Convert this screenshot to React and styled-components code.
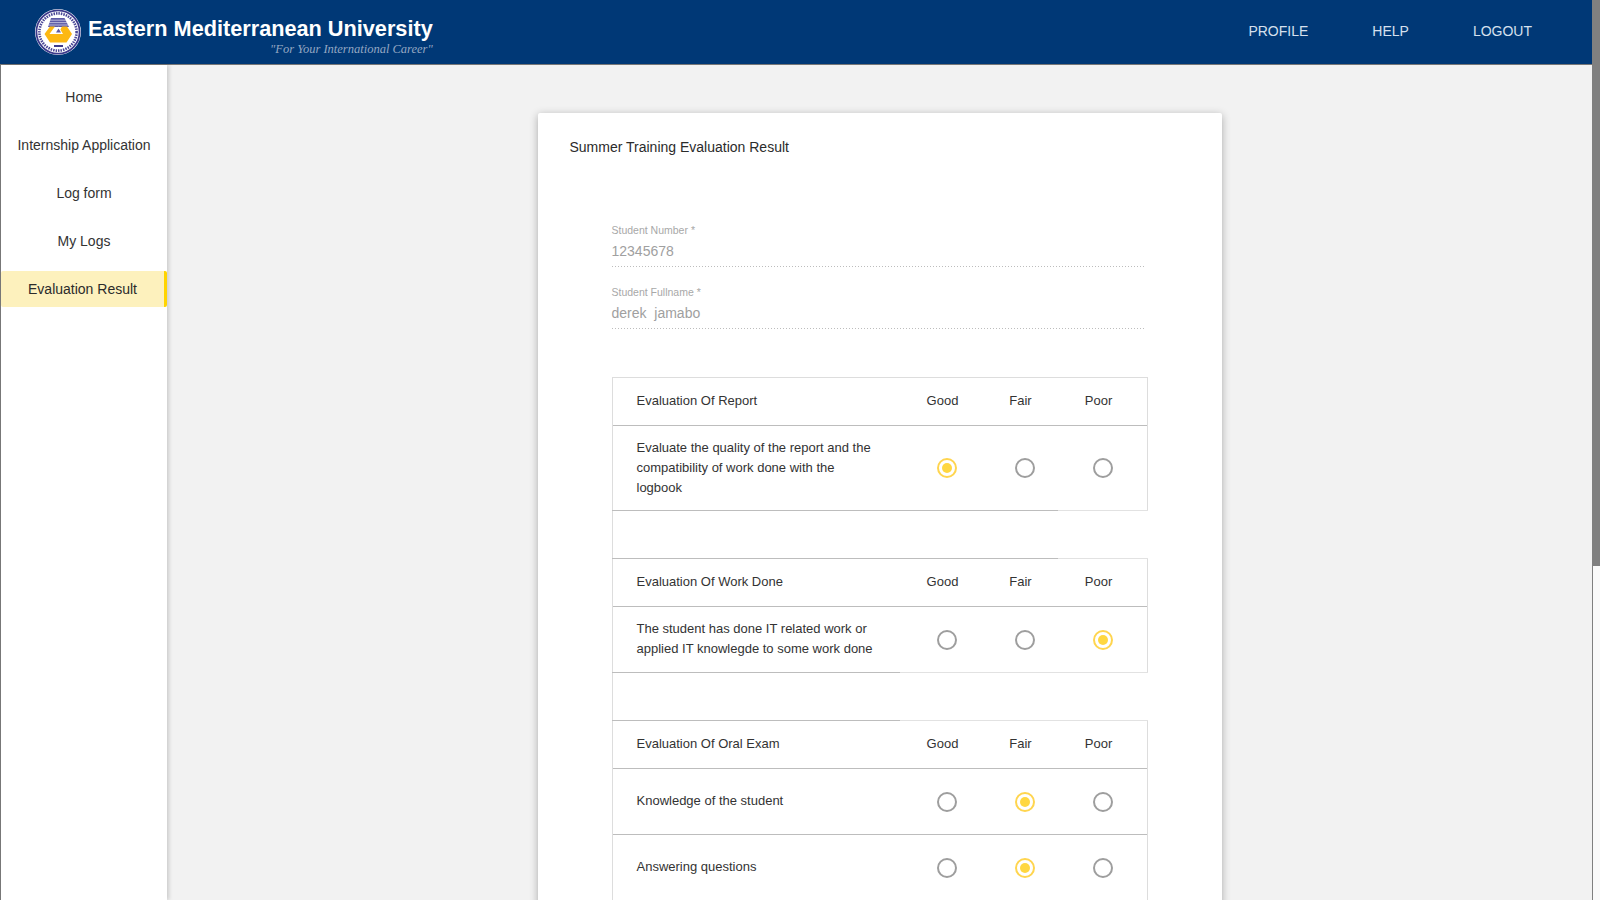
import React from "react";
import styled, { createGlobalStyle } from "styled-components";

const Global = createGlobalStyle`
  html, body { height: 100%; overflow: hidden; }
  body { margin: 0; background: #f2f2f2; font-family: "Liberation Sans", Arial, sans-serif; color: #333; }
  #root { height: 100%; }
  * { box-sizing: border-box; }
`;
const Viewport = styled.div`display: flex; height: 100vh; overflow: hidden;`;
const Shell = styled.div`display: flex; flex-direction: column; flex: 1; min-width: 0; height: 100%;`;
const ScrollTrack = styled.div`width: 8px; flex: none; background: #fafafa; border-left: 1px solid #808080;`;
const ScrollThumb = styled.div`height: 566px; margin-left: -1px; background: #808080;`;
const Header = styled.header`
  height: 65px; flex: none; background: #003876; border-bottom: 1px solid #777;
  display: flex; align-items: center; justify-content: space-between; padding: 0 60px 3px 35px;
`;
const Brand = styled.div`display: flex; align-items: center; gap: 7px; padding-top: 2px;`;
const BrandText = styled.div`display: flex; flex-direction: column; align-items: flex-end; color: #fff; padding-top: 11px;`;
const BrandName = styled.div`font: 700 21.7px/24px "Liberation Sans", sans-serif; white-space: nowrap;`;
const Motto = styled.div`font: italic 12.5px/16px "Liberation Serif", serif; color: #94a7c2; white-space: nowrap;`;
const Nav = styled.nav`display: flex; gap: 64px;`;
const NavLink = styled.a`font-size: 14px; color: #d6e0ee; line-height: 20px;`;
const Body = styled.div`display: flex; flex: 1; min-height: 0;`;
const Sidebar = styled.aside`
  width: 167px; flex: none; background: #fff; border-left: 1px solid #777; padding-top: 14px;
  box-shadow: 2px 0 4px rgba(0,0,0,.16); display: flex; flex-direction: column; gap: 12px;
`;
const SideItem = styled.div`
  height: 36px; display: flex; align-items: center; justify-content: center; font-size: 14px;
  color: ${p => p.$active ? "#2b2b2b" : "#333"};
  background: ${p => p.$active ? "#fdf1bd" : "transparent"};
  border-right: ${p => p.$active ? "3px solid #ffd400" : "0"};
  border-radius: ${p => p.$active ? "2px" : "0"};
`;
const Main = styled.main`flex: 1; display: flex; justify-content: center; padding-top: 48px; min-width: 0;`;
const Card = styled.section`
  width: 684px; background: #fff; border-radius: 2px; padding: 24px 32px 0;
  box-shadow: 0 2px 8px rgba(0,0,0,.3); height: 1400px; flex: none;
`;
const Title = styled.h1`margin: 0; font-weight: 400; font-size: 14px; line-height: 20px; color: #2b2b2b;`;
const Form = styled.div`margin: 66px 0 0 42px; width: 536px;`;
const Field = styled.div`
  width: 534px; height: 44px; margin-bottom: 18px; display: flex; flex-direction: column;
  background: linear-gradient(to right, #bdbdbd 1px, transparent 1px) left bottom / 3px 1px repeat-x;
`;
const FieldLabel = styled.label`font-size: 10.5px; line-height: 14px; color: #a8a8a8;`;
const FieldValue = styled.div`font-size: 14px; line-height: 20px; margin-top: 4px; color: #a0a0a0; white-space: pre;`;
const Table = styled.div`
  margin-top: 48px; border-left: 1px solid #ddd; border-right: 1px solid #ddd;
  display: flex; flex-direction: column;
`;
const Gap = styled.div`height: 47px; margin-right: -1px; background: #fff;`;
const Row = styled.div`
  display: grid; grid-template-columns: 271px 78px 78px 78px; align-items: center; padding-left: 24px;
  font-size: 13px; line-height: 20px; color: #333; flex: none;
  height: ${p => p.$h}px;
  border-bottom: ${p => p.$line === "none" ? "0" : "1px solid #bdbdbd"};
`;
const HeadRow = styled(Row)`border-top: ${p => p.$top ? "1px solid #ddd" : "0"};`;
const Split = styled.div`
  height: 1px; flex: none; margin: 0 -1px;
  background: linear-gradient(to right, #bdbdbd ${p => p.$to}px, #e2e2e2 ${p => p.$to}px);
`;
const HeadLabel = styled.div`margin-bottom: 2px;`;
const HeadCell = styled.div`text-align: center; padding-right: 8px; margin-bottom: 2px;`;
const Question = styled.div`width: 240px; margin-bottom: ${p => p.$tall ? "0" : "2px"};`;
const RadioCell = styled.div`display: flex; justify-content: center;`;
const Radio = styled.span`
  width: 20px; height: 20px; border-radius: 50%; display: flex; align-items: center; justify-content: center;
  border: 2px solid ${p => p.$on ? "#ffd54f" : "#9e9e9e"};
  &::after { content: ""; width: 10px; height: 10px; border-radius: 50%; background: ${p => p.$on ? "#ffd740" : "transparent"}; }
`;

const Logo = () => (
  <svg width="46" height="46" viewBox="0 0 46 46" aria-label="EMU logo">
    <circle cx="23" cy="23" r="23" fill="#fff" />
    <circle cx="23" cy="23" r="21.6" fill="none" stroke="#3d3a8c" strokeWidth="1.8" />
    <circle cx="23" cy="23" r="18.6" fill="none" stroke="#4a4796" strokeWidth="2.6" strokeDasharray="1.5 1" />
    <circle cx="23" cy="23" r="16.6" fill="#fff" />
    <path d="M16 9H29.5L34 18H13z" fill="#5d5aa6" />
    <path d="M15 11.2H31M14 13.6H32M13 16H33" stroke="#dfdff0" strokeWidth=".7" />
    <path d="M9.5 25L15 17.5H20L14.5 25H23L27 17.5H32L37 25L31.5 33.5H15z" fill="#fdb813" />
    <path d="M23.5 17.5L28 25H19z" fill="#fff" />
    <path d="M23.5 19.5L26 23.5H21z" fill="#5d5aa6" />
    <path d="M14.5 25H32V27H14.5z" fill="#fdb813" />
    <rect x="19" y="36" width="9" height="2" fill="#3d3a8c" />
  </svg>
);

const sections = [
  { title: "Evaluation Of Report", top: true, split: 446, rows: [{ q: "Evaluate the quality of the report and the compatibility of work done with the logbook", h: 84, v: 0, tall: true }] },
  { title: "Evaluation Of Work Done", split: 288, rows: [{ q: "The student has done IT related work or applied IT knowlegde to some work done", h: 65, v: 2 }] },
  { title: "Evaluation Of Oral Exam", rows: [{ q: "Knowledge of the student", h: 66, v: 1 }, { q: "Answering questions", h: 66, v: 1 }] },
];

export default function App() {
  return (
    <Viewport>
      <Global />
      <Shell>
        <Header>
          <Brand>
            <Logo />
            <BrandText>
              <BrandName>Eastern Mediterranean University</BrandName>
              <Motto>"For Your International Career"</Motto>
            </BrandText>
          </Brand>
          <Nav>
            <NavLink>PROFILE</NavLink>
            <NavLink>HELP</NavLink>
            <NavLink>LOGOUT</NavLink>
          </Nav>
        </Header>
        <Body>
          <Sidebar>
            <SideItem>Home</SideItem>
            <SideItem>Internship Application</SideItem>
            <SideItem>Log form</SideItem>
            <SideItem>My Logs</SideItem>
            <SideItem $active>Evaluation Result</SideItem>
          </Sidebar>
          <Main>
            <Card>
              <Title>Summer Training Evaluation Result</Title>
              <Form>
                <Field>
                  <FieldLabel>Student Number *</FieldLabel>
                  <FieldValue>12345678</FieldValue>
                </Field>
                <Field>
                  <FieldLabel>Student Fullname *</FieldLabel>
                  <FieldValue>derek  jamabo</FieldValue>
                </Field>
                <Table>
                  {sections.map((s) => (
                    <React.Fragment key={s.title}>
                      <HeadRow $h={s.top ? 49 : 48} $top={s.top}>
                        <HeadLabel>{s.title}</HeadLabel>
                        <HeadCell>Good</HeadCell>
                        <HeadCell>Fair</HeadCell>
                        <HeadCell>Poor</HeadCell>
                      </HeadRow>
                      {s.rows.map((r) => (
                        <Row key={r.q} $h={r.h} $line={s.split ? "none" : undefined}>
                          <Question $tall={r.tall}>{r.q}</Question>
                          {[0, 1, 2].map((k) => (
                            <RadioCell key={k}><Radio $on={k === r.v} /></RadioCell>
                          ))}
                        </Row>
                      ))}
                      {s.split && <Split $to={s.split} />}
                      {s.split && <Gap />}
                      {s.split && <Split $to={s.split} />}
                    </React.Fragment>
                  ))}
                </Table>
              </Form>
            </Card>
          </Main>
        </Body>
      </Shell>
      <ScrollTrack><ScrollThumb /></ScrollTrack>
    </Viewport>
  );
}
